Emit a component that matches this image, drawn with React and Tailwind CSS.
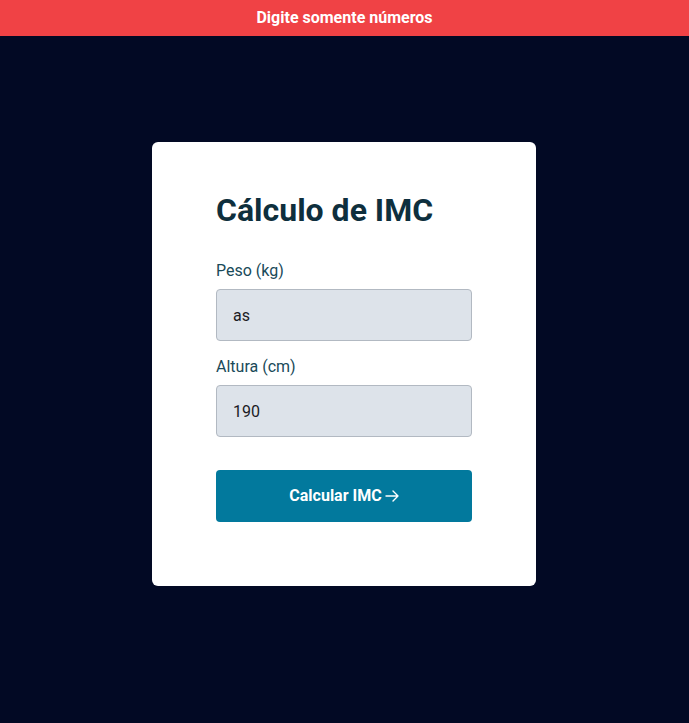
import { useState } from 'react'

function Arrow() {
    return (
        <svg width="14" height="12" viewBox="0 0 14 12" fill="none" stroke="currentColor" strokeWidth="1.4" strokeLinecap="round" strokeLinejoin="round">
            <path d="M1 6h12M8 1l5 5-5 5" />
        </svg>
    )
}

function App() {
    const [peso, setPeso] = useState('as')
    const [altura, setAltura] = useState('190')

    return (
        <div className="min-h-[723px] bg-[#020924] font-['Roboto',sans-serif] flex flex-col">
            {/* Alert bar */}
            <div className="h-9 bg-[#f04245] flex items-center justify-center text-white font-bold text-base">
                Digite somente números
            </div>

            {/* Card */}
            <div className="flex justify-center pt-[106px] pr-px">
                <form
                    onSubmit={(e) => e.preventDefault()}
                    className="w-[384px] bg-white rounded-md px-16 pt-12 pb-16 flex flex-col"
                >
                    <h1 className="text-[32px] font-bold text-[#0e2f3d] leading-10 mb-[29px]">Cálculo de IMC</h1>

                    <label className="text-base leading-6 text-[#194a59] mb-1.5">Peso (kg)</label>
                    <input
                        type="text"
                        value={peso}
                        onChange={(e) => setPeso(e.target.value)}
                        className="h-[52px] w-full px-4 bg-[#dde3ea] border border-[#b2b9c2] rounded text-base text-[#1b1b24] outline-none"
                    />

                    <label className="text-base leading-6 text-[#194a59] mt-[14px] mb-1.5">Altura (cm)</label>
                    <input
                        type="text"
                        value={altura}
                        onChange={(e) => setAltura(e.target.value)}
                        className="h-[52px] w-full px-4 bg-[#dde3ea] border border-[#b2b9c2] rounded text-base text-[#1b1b24] outline-none"
                    />

                    <button
                        type="submit"
                        className="mt-[33px] h-[52px] w-full bg-[#02799d] rounded text-white font-bold text-base flex items-center justify-center gap-[3px]"
                    >
                        Calcular IMC
                        <Arrow />
                    </button>
                </form>
            </div>
        </div>
    )
}

export default App
